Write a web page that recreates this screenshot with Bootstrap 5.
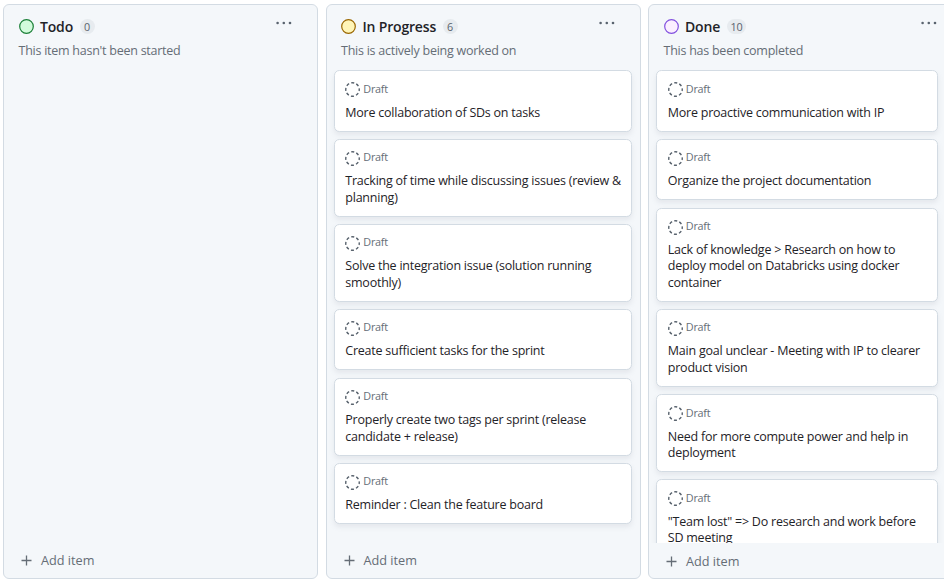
<!DOCTYPE html>
<html lang="en">
<head>
<meta charset="utf-8">
<meta name="viewport" content="width=device-width, initial-scale=1">
<title>Project board</title>
<link href="https://cdn.jsdelivr.net/npm/bootstrap@5.3.0/dist/css/bootstrap.min.css" rel="stylesheet">
<style>
body{font-family:"Segoe UI","Open Sans","Noto Sans",sans-serif;font-size:12.5px;line-height:16.3px;color:#1f2328;background:#fff}
.board{height:579px;padding:4px 0 0 3px;gap:7.5px}
.lane{width:315px;height:575px;background:#f4f7fa;border:1px solid #d3dbe3;border-radius:6px}
.lane-head{height:65px;padding:12px 25px 0 14.5px}
.lane-head h2{font-size:14px;line-height:19px;font-weight:600;margin:0 0 0 6.5px;letter-spacing:-.18px}
.count{font-size:10.8px;line-height:15px;height:15px;min-width:15px;padding:0 4px;background:#e7ebef;color:#59636e;margin-left:6.5px;letter-spacing:-.3px}
.muted{color:#656d76}
.lane-note{font-size:12.5px;line-height:17px;margin-top:6px;letter-spacing:-.25px}
.lane-body{height:473px;padding:0 8px 0 7px;gap:7.2px;overflow:hidden}
.lane-done .lane-body{padding-right:24px}
.lane-done .add{padding-top:1px}
.item{background:#fff;border:1px solid #d3dbe3;border-radius:5.4px;padding:10.6px 9px 9.7px 10.8px;box-shadow:0 3px 5px rgba(140,149,159,.15)}
.item-kind{font-size:10.8px;line-height:14px;height:16px;gap:3px;margin-bottom:7px;letter-spacing:-.25px}
.item-kind svg{margin-top:.5px}
.item-title{letter-spacing:-.23px;white-space:nowrap}
.add{height:35px;padding:0 0 0 17px;gap:9px;font-size:12.7px;font-weight:500}
</style>
<script src="https://cdn.jsdelivr.net/npm/bootstrap@5.3.0/dist/js/bootstrap.bundle.min.js" defer></script>
</head>
<body class="overflow-hidden">
<svg class="d-none">
  <symbol id="draft" viewBox="0 0 16 16"><circle cx="8" cy="8" r="7.2" fill="none" stroke="#59636e" stroke-width="1.5" stroke-dasharray="3.3 2.355" stroke-dashoffset="1.65"/></symbol>
  <symbol id="dots" viewBox="0 0 16 4"><g fill="#59636e"><circle cx="1.6" cy="2" r="1.3"/><circle cx="7.8" cy="2" r="1.3"/><circle cx="14" cy="2" r="1.3"/></g></symbol>
  <symbol id="plus" viewBox="0 0 11 11"><path d="M5.5 .5v10M.5 5.5h10" stroke="#656d76" stroke-width="1.3" fill="none"/></symbol>
</svg>
<main class="board d-flex">
  <section class="lane flex-shrink-0 d-flex flex-column">
    <header class="lane-head">
      <div class="d-flex align-items-center">
        <svg width="15" height="15"><circle cx="7.5" cy="7.5" r="6.8" fill="#d2fbdc" stroke="#1a7f37" stroke-width="1.2"/></svg>
        <h2>Todo</h2><span class="count rounded-pill text-center">0</span>
        <svg class="ms-auto mb-2" width="16" height="4"><use href="#dots"/></svg>
      </div>
      <div class="lane-note muted">This item hasn't been started</div>
    </header>
    <div class="lane-body d-flex flex-column"></div>
    <div class="add muted d-flex align-items-center"><svg width="11" height="11"><use href="#plus"/></svg><span>Add item</span></div>
  </section>

  <section class="lane flex-shrink-0 d-flex flex-column">
    <header class="lane-head">
      <div class="d-flex align-items-center">
        <svg width="15" height="15"><circle cx="7.5" cy="7.5" r="6.8" fill="#fff5b8" stroke="#9a6700" stroke-width="1.2"/></svg>
        <h2>In Progress</h2><span class="count rounded-pill text-center">6</span>
        <svg class="ms-auto mb-2" width="16" height="4"><use href="#dots"/></svg>
      </div>
      <div class="lane-note muted">This is actively being worked on</div>
    </header>
    <div class="lane-body d-flex flex-column">
      <article class="item"><div class="item-kind muted d-flex align-items-start"><svg width="15" height="15"><use href="#draft"/></svg>Draft</div><div class="item-title">More collaboration of SDs on tasks</div></article>
      <article class="item"><div class="item-kind muted d-flex align-items-start"><svg width="15" height="15"><use href="#draft"/></svg>Draft</div><div class="item-title">Tracking of time while discussing issues (review &amp;<br>planning)</div></article>
      <article class="item"><div class="item-kind muted d-flex align-items-start"><svg width="15" height="15"><use href="#draft"/></svg>Draft</div><div class="item-title">Solve the integration issue (solution running<br>smoothly)</div></article>
      <article class="item"><div class="item-kind muted d-flex align-items-start"><svg width="15" height="15"><use href="#draft"/></svg>Draft</div><div class="item-title">Create sufficient tasks for the sprint</div></article>
      <article class="item"><div class="item-kind muted d-flex align-items-start"><svg width="15" height="15"><use href="#draft"/></svg>Draft</div><div class="item-title">Properly create two tags per sprint (release<br>candidate + release)</div></article>
      <article class="item"><div class="item-kind muted d-flex align-items-start"><svg width="15" height="15"><use href="#draft"/></svg>Draft</div><div class="item-title">Reminder : Clean the feature board</div></article>
    </div>
    <div class="add muted d-flex align-items-center"><svg width="11" height="11"><use href="#plus"/></svg><span>Add item</span></div>
  </section>

  <section class="lane lane-done flex-shrink-0 d-flex flex-column">
    <header class="lane-head">
      <div class="d-flex align-items-center">
        <svg width="15" height="15"><circle cx="7.5" cy="7.5" r="6.8" fill="#fbefff" stroke="#8250df" stroke-width="1.2"/></svg>
        <h2>Done</h2><span class="count rounded-pill text-center">10</span>
        <svg class="ms-auto mb-2" width="16" height="4"><use href="#dots"/></svg>
      </div>
      <div class="lane-note muted">This has been completed</div>
    </header>
    <div class="lane-body d-flex flex-column">
      <article class="item flex-shrink-0"><div class="item-kind muted d-flex align-items-start"><svg width="15" height="15"><use href="#draft"/></svg>Draft</div><div class="item-title">More proactive communication with IP</div></article>
      <article class="item flex-shrink-0"><div class="item-kind muted d-flex align-items-start"><svg width="15" height="15"><use href="#draft"/></svg>Draft</div><div class="item-title">Organize the project documentation</div></article>
      <article class="item flex-shrink-0"><div class="item-kind muted d-flex align-items-start"><svg width="15" height="15"><use href="#draft"/></svg>Draft</div><div class="item-title">Lack of knowledge &gt; Research on how to<br>deploy model on Databricks using docker<br>container</div></article>
      <article class="item flex-shrink-0"><div class="item-kind muted d-flex align-items-start"><svg width="15" height="15"><use href="#draft"/></svg>Draft</div><div class="item-title">Main goal unclear - Meeting with IP to clearer<br>product vision</div></article>
      <article class="item flex-shrink-0"><div class="item-kind muted d-flex align-items-start"><svg width="15" height="15"><use href="#draft"/></svg>Draft</div><div class="item-title">Need for more compute power and help in<br>deployment</div></article>
      <article class="item flex-shrink-0"><div class="item-kind muted d-flex align-items-start"><svg width="15" height="15"><use href="#draft"/></svg>Draft</div><div class="item-title">"Team lost" =&gt; Do research and work before<br>SD meeting</div></article>
    </div>
    <div class="add muted d-flex align-items-center"><svg width="11" height="11"><use href="#plus"/></svg><span>Add item</span></div>
  </section>
</main>
</body>
</html>
